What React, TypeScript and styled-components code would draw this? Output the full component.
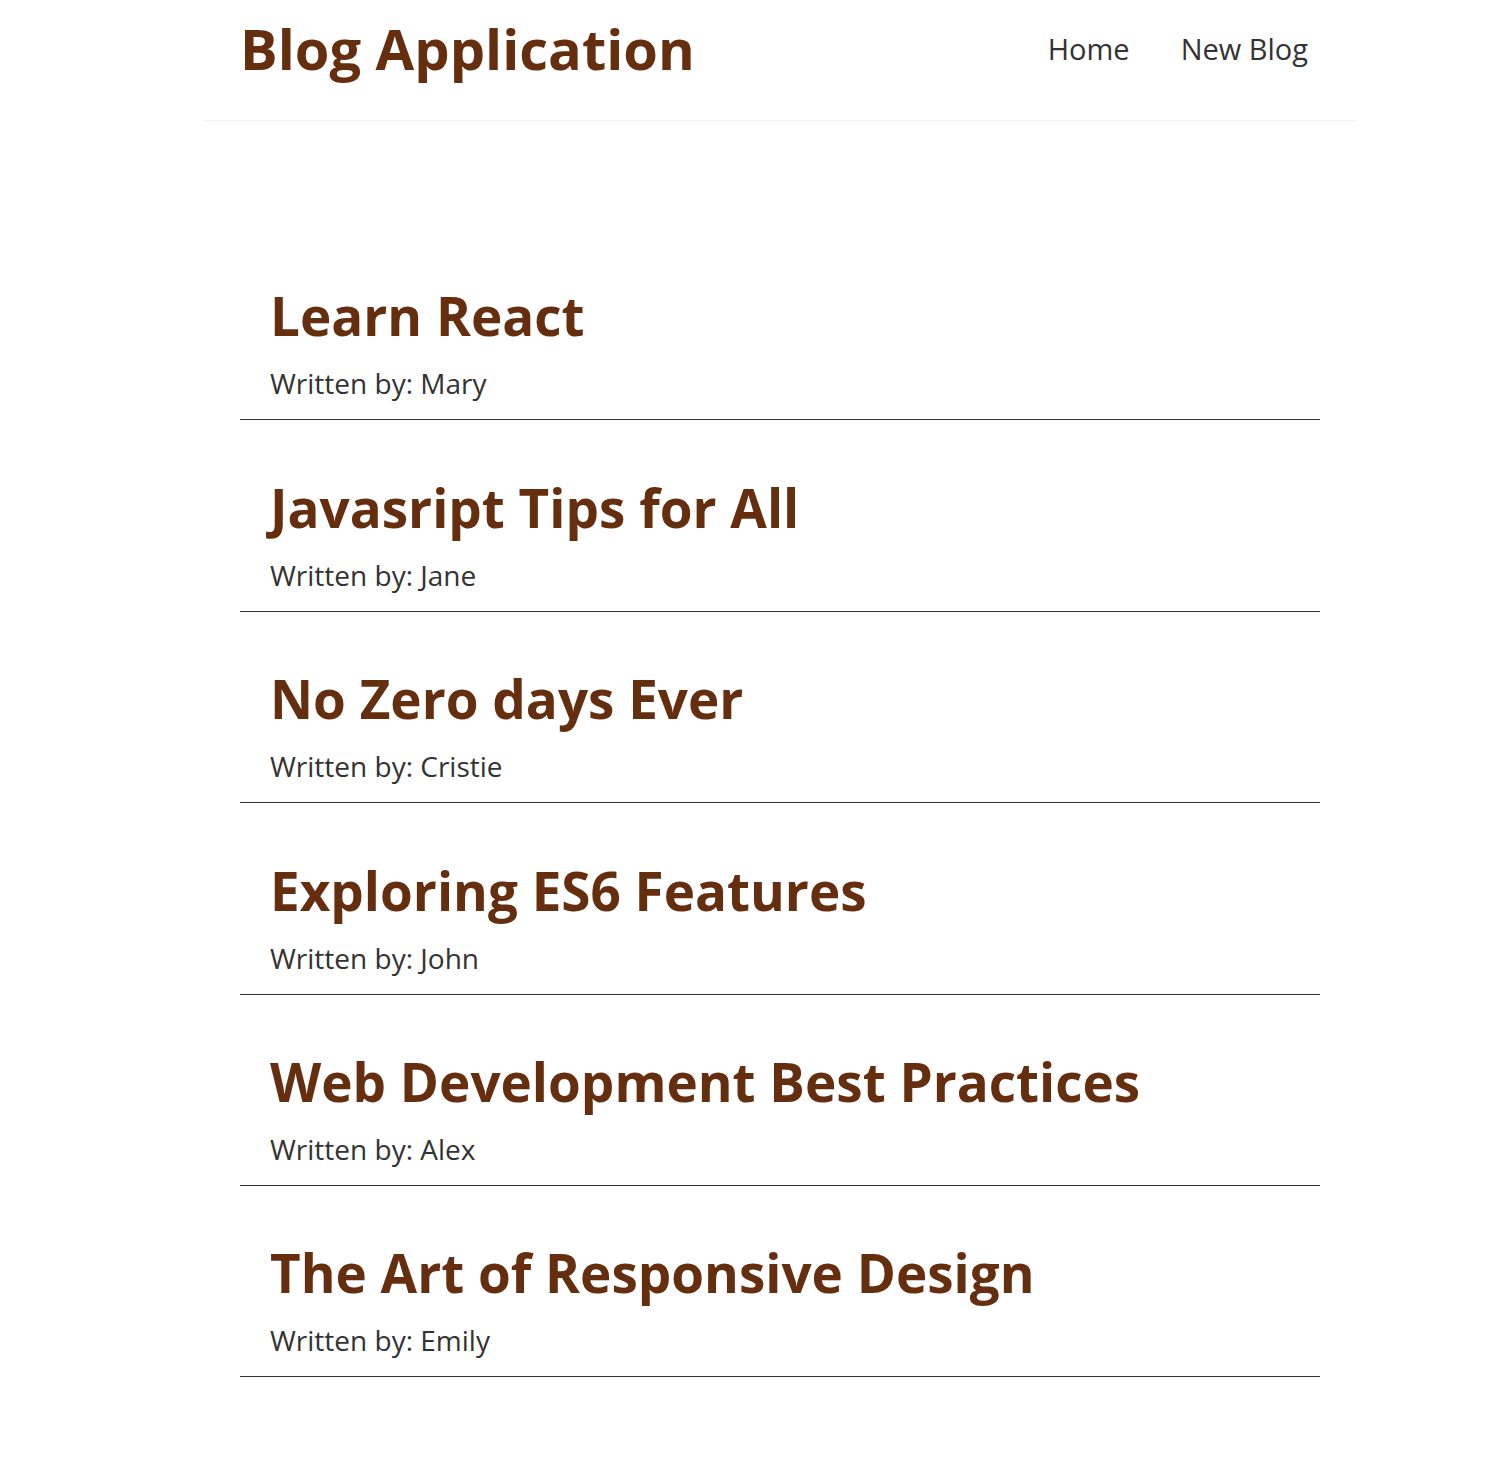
import React from 'react';
import styled, { createGlobalStyle } from 'styled-components';

const GlobalStyle = createGlobalStyle`
  * {
    margin: 0;
    padding: 0;
    box-sizing: border-box;
  }
  body {
    font-family: "Open Sans", "Noto Sans", sans-serif;
    color: #333;
    background: #fff;
  }
`;

const Page = styled.div`
  width: 1152px;
  margin-left: 204px;
`;

const Navbar = styled.nav`
  display: flex;
  align-items: center;
  height: 121px;
  padding: 0 48px 24px 36px;
  border-bottom: 1px solid #f2f2f2;
`;

const Brand = styled.h1`
  font-size: 56px;
  font-weight: 700;
  color: #652f0f;
  line-height: 1;
`;

const Links = styled.div`
  margin-left: auto;
  display: flex;
  gap: 51px;
`;

const NavLink = styled.a`
  font-size: 29px;
  line-height: 1;
  color: #333;
  text-decoration: none;
`;

const Content = styled.main`
  padding: 108px 36px 0;
`;

const Preview = styled.div`
  padding: 54.4px 30px 16px;
  border-bottom: 1px solid #333;
`;

const Title = styled.h2`
  font-size: 53px;
  font-weight: 700;
  color: #652f0f;
  line-height: 65px;
  margin-bottom: 15px;
`;

const Author = styled.p`
  font-size: 28px;
  line-height: 40px;
`;

const blogs = [
  { id: 1, title: 'Learn React', author: 'Mary' },
  { id: 2, title: 'Javasript Tips for All', author: 'Jane' },
  { id: 3, title: 'No Zero days Ever', author: 'Cristie' },
  { id: 4, title: 'Exploring ES6 Features', author: 'John' },
  { id: 5, title: 'Web Development Best Practices', author: 'Alex' },
  { id: 6, title: 'The Art of Responsive Design', author: 'Emily' },
];

export default function App() {
  return (
    <>
      <GlobalStyle />
      <Page>
        <Navbar>
          <Brand>Blog Application</Brand>
          <Links>
            <NavLink href="/">Home</NavLink>
            <NavLink href="/create">New Blog</NavLink>
          </Links>
        </Navbar>
        <Content>
          {blogs.map((blog) => (
            <Preview key={blog.id}>
              <Title>{blog.title}</Title>
              <Author>Written by: {blog.author}</Author>
            </Preview>
          ))}
        </Content>
      </Page>
    </>
  );
}
